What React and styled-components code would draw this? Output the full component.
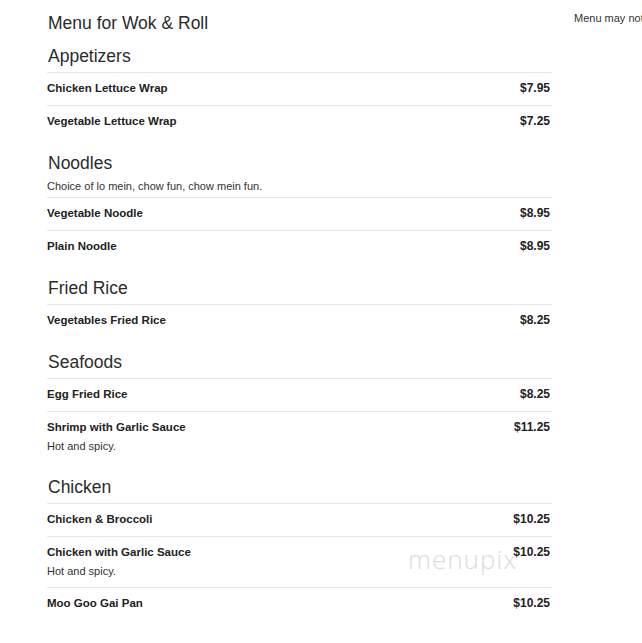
import React from "react";
import styled, { createGlobalStyle } from "styled-components";

const GlobalStyle = createGlobalStyle`
  html, body {
    margin: 0;
    padding: 0;
    background: #fff;
  }
  body {
    font-family: "Liberation Sans", Arial, sans-serif;
    color: #333;
    overflow: hidden;
  }
`;

const Page = styled.div`
  position: relative;
  display: flex;
  align-items: flex-start;
  gap: 22px;
  padding: 13px 0 0 47px;
  width: 642px;
  height: 643px;
  box-sizing: border-box;
  overflow: hidden;
`;

const Main = styled.div`
  flex: 0 0 505px;
  width: 505px;
`;

const Sidebar = styled.div`
  flex: 0 0 auto;
  margin-top: -2px;
  font-size: 11px;
  line-height: 14px;
  color: #333;
  white-space: nowrap;
`;

const Title = styled.h1`
  margin: 0 0 13px 1px;
  font-size: 17.5px;
  line-height: 20px;
  font-weight: normal;
  color: #2b2b2b;
`;

const Section = styled.section`
  & + & {
    margin-top: 15px;
  }
`;

const SectionTitle = styled.h2`
  margin: 0 0 6px 1px;
  font-size: 17.5px;
  line-height: 20px;
  font-weight: normal;
  color: #2b2b2b;
`;

const SectionNote = styled.p`
  margin: 0 0 4px;
  font-size: 11px;
  line-height: 14px;
  color: #333;
`;

const Row = styled.div`
  border-top: 1px solid #e6e6e6;
  padding: 8px 0 10px;
`;

const RowHead = styled.div`
  display: flex;
  justify-content: space-between;
  align-items: baseline;
  padding-right: 2px;
`;

const Name = styled.span`
  font-size: 11.5px;
  line-height: 14px;
  font-weight: bold;
  color: #222;
`;

const Price = styled.span`
  font-size: 12px;
  line-height: 14px;
  font-weight: bold;
  color: #222;
`;

const Desc = styled.div`
  margin: 5px 0 -1px;
  font-size: 11px;
  line-height: 14px;
  color: #333;
`;

const Watermark = styled.div`
  position: absolute;
  left: 408px;
  top: 541px;
  font-family: "Open Sans", "Liberation Sans", sans-serif;
  font-weight: 300;
  font-size: 26px;
  letter-spacing: 1px;
  color: #dcdcdc;
  pointer-events: none;
`;

const sections = [
  {
    title: "Appetizers",
    items: [
      { name: "Chicken Lettuce Wrap", price: "$7.95" },
      { name: "Vegetable Lettuce Wrap", price: "$7.25" },
    ],
  },
  {
    title: "Noodles",
    note: "Choice of lo mein, chow fun, chow mein fun.",
    items: [
      { name: "Vegetable Noodle", price: "$8.95" },
      { name: "Plain Noodle", price: "$8.95" },
    ],
  },
  {
    title: "Fried Rice",
    items: [{ name: "Vegetables Fried Rice", price: "$8.25" }],
  },
  {
    title: "Seafoods",
    items: [
      { name: "Egg Fried Rice", price: "$8.25" },
      { name: "Shrimp with Garlic Sauce", price: "$11.25", desc: "Hot and spicy." },
    ],
  },
  {
    title: "Chicken",
    items: [
      { name: "Chicken & Broccoli", price: "$10.25" },
      { name: "Chicken with Garlic Sauce", price: "$10.25", desc: "Hot and spicy." },
      { name: "Moo Goo Gai Pan", price: "$10.25" },
    ],
  },
];

const App = () => {
  return (
    <>
      <GlobalStyle />
      <Page>
        <Main>
          <Title>Menu for Wok &amp; Roll</Title>
          {sections.map((section) => (
            <Section key={section.title}>
              <SectionTitle>{section.title}</SectionTitle>
              {section.note && <SectionNote>{section.note}</SectionNote>}
              {section.items.map((item) => (
                <Row key={item.name}>
                  <RowHead>
                    <Name>{item.name}</Name>
                    <Price>{item.price}</Price>
                  </RowHead>
                  {item.desc && <Desc>{item.desc}</Desc>}
                </Row>
              ))}
            </Section>
          ))}
        </Main>
        <Sidebar>Menu may not be up to date. Check with restaurant before ordering.</Sidebar>
        <Watermark>menupix</Watermark>
      </Page>
    </>
  );
};

export default App;
